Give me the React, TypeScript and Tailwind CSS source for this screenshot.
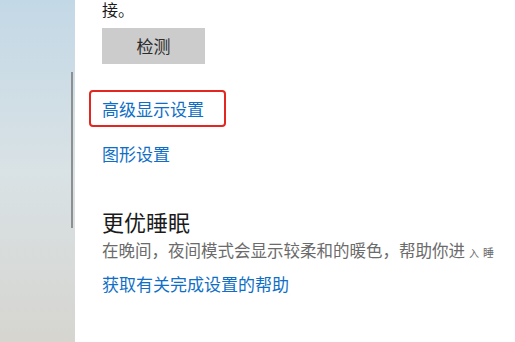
export default function App() {
  const cjk = { fontFamily: '"Noto Sans CJK SC", "Noto Sans", sans-serif' };
  return (
    <div className="flex w-[515px] h-[342px] bg-white overflow-hidden" style={cjk}>
      <div className="flex justify-end w-[75px] h-full pt-[72px] pr-[2px] bg-gradient-to-b from-[#c3d8e6] via-[#d9e2e5] to-[#d6d5d0]">
        <div className="w-[2px] h-[156px] bg-[#8d8f90]" />
      </div>
      <main className="flex flex-col items-start flex-1 pl-[27px]">
        <p className="pt-[1px] text-[16px] leading-[17px] text-[#1b1b1b]">接。</p>
        <button className="mt-[10px] w-[103px] h-[36px] bg-[#cccccc] text-[17px] text-[#2b2b2b]">检测</button>
        <div className="flex items-center mt-[26px] -ml-[13px] w-[137px] h-[37px] pl-[11px] border-2 border-[#e3261f] rounded-[4px]">
          <span className="text-[17px] leading-[24px] text-[#0f6fc6]">高级显示设置</span>
        </div>
        <a className="mt-[15px] text-[17px] leading-[24px] text-[#0f6fc6]">图形设置</a>
        <h2 className="mt-[40px] text-[22px] leading-[30px] text-[#1b1b1b]">更优睡眠</h2>
        <p className="mt-[3px] text-[16.5px] leading-[22px] text-[#6b6b6b] whitespace-nowrap">
          在晚间，夜间模式会显示较柔和的暖色，帮助你进
          <span className="ml-[4px] text-[10px]">入</span>
          <span className="ml-[4px] text-[11px]">睡</span>
        </p>
        <a className="mt-[8px] text-[17px] leading-[24px] text-[#0f6fc6]">获取有关完成设置的帮助</a>
      </main>
    </div>
  );
}
